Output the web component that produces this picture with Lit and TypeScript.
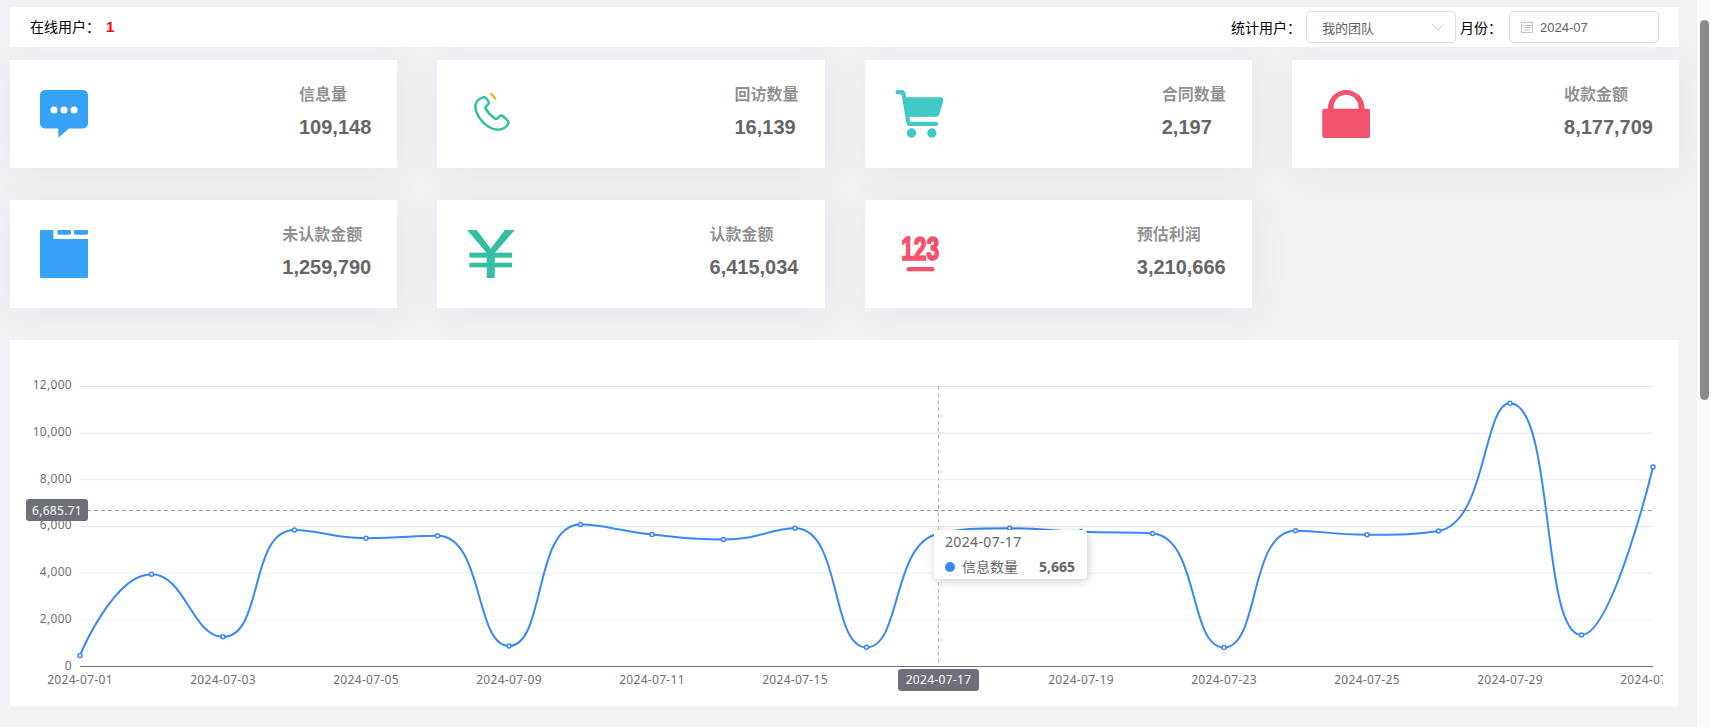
import { LitElement, html, css, svg } from "lit";
import { customElement } from "lit/decorators.js";

const DATA = [450, 3930, 1250, 5830, 5480, 5580, 860, 6060, 5640, 5420, 5900, 800, 5665, 5900, 5750, 5680, 790, 5800, 5630, 5790, 11260, 1330, 8530];
const LABELS: [number, string][] = [
  [0, "2024-07-01"], [2, "2024-07-03"], [4, "2024-07-05"], [6, "2024-07-09"], [8, "2024-07-11"], [10, "2024-07-15"],
  [14, "2024-07-19"], [16, "2024-07-23"], [18, "2024-07-25"], [20, "2024-07-29"], [22, "2024-07-31"],
];
const X0 = 54, DX = 71.5, Y0 = 310, PER = 280 / 12000;
const px = (i: number) => X0 + i * DX;
const py = (v: number) => Y0 - v * PER;

function smoothPath(pts: [number, number][], smooth = 0.5): string {
  let d = `M${pts[0][0]} ${pts[0][1]}`;
  let cpx = pts[0][0], cpy = pts[0][1];
  for (let i = 1; i < pts.length; i++) {
    const [x, y] = pts[i];
    const [prevX, prevY] = pts[i - 1];
    let n0x = x, n0y = y, n1x = x, n1y = y;
    if (i + 1 < pts.length) {
      const [nextX, nextY] = pts[i + 1];
      let vx = nextX - prevX, vy = nextY - prevY;
      const lenPrev = Math.hypot(x - prevX, y - prevY);
      const lenNext = Math.hypot(nextX - x, nextY - y);
      const r = lenNext / (lenNext + lenPrev);
      n1x = x + vx * smooth * r;
      n1y = y + vy * smooth * r;
      n1x = Math.max(Math.min(n1x, Math.max(nextX, x)), Math.min(nextX, x));
      n1y = Math.max(Math.min(n1y, Math.max(nextY, y)), Math.min(nextY, y));
      vx = n1x - x; vy = n1y - y;
      n0x = x - (vx * lenPrev) / lenNext;
      n0y = y - (vy * lenPrev) / lenNext;
      n0x = Math.max(Math.min(n0x, Math.max(prevX, x)), Math.min(prevX, x));
      n0y = Math.max(Math.min(n0y, Math.max(prevY, y)), Math.min(prevY, y));
      vx = x - n0x; vy = y - n0y;
      n1x = x + (vx * lenNext) / lenPrev;
      n1y = y + (vy * lenNext) / lenPrev;
    }
    d += `C${cpx} ${cpy} ${n0x} ${n0y} ${x} ${y}`;
    cpx = n1x; cpy = n1y;
  }
  return d;
}

const ICONS: Record<string, unknown> = {
  message: html`<svg class="icon" viewBox="0 0 48 48"><path fill="#36a3f7" d="M5 0H43A5 5 0 0 1 48 5V33.5A5 5 0 0 1 43 38.5H29L18.3 47.7V38.5H5A5 5 0 0 1 0 33.5V5A5 5 0 0 1 5 0Z"/><g fill="#fff"><circle cx="14" cy="20" r="3.5"/><circle cx="24" cy="20" r="3.5"/><circle cx="34" cy="20" r="3.5"/></g></svg>`,
  phone: html`<svg class="icon" viewBox="111.75 150 144 144"><path fill="none" stroke="#34bfa3" stroke-width="7.5" stroke-linejoin="round" d="M160 172Q165 170 169 175L176 184Q179 189 174 194L168 200Q166 203 168 207Q178 224 196 236Q200 238 203 235L209 229Q214 225 219 228L233 241Q238 246 235 252Q226 268 205 269Q172 268 148 232Q134 210 138 192Q142 178 160 172Z"/><path fill="none" stroke="#ffa500" stroke-width="6" d="M182 160Q192 167 198 178"/></svg>`,
  cart: html`<svg class="icon" viewBox="103.5 150 144 144"><g fill="#40c9c6"><path d="M105 157Q105 150 113 150H124Q133 150 135 160L137 172H242Q251 172 249 182L236 224Q235 229 229 230L147 231L148 245H226Q233 245 233 251Q233 258 226 258H147Q139 258 138 250L124 168Q123 163 118 163H112Q105 163 105 157Z"/><circle cx="153" cy="279" r="14"/><circle cx="214" cy="279" r="14"/></g></svg>`,
  lock: html`<svg class="icon" viewBox="365.25 270 144 144"><g fill="#f4516c"><path fill-rule="evenodd" d="M383 330V325A55 55 0 0 1 493 325V330ZM400 328H475V322A37.5 37.5 0 0 0 400 322Z"/><rect x="366" y="326" width="144" height="88" rx="8"/></g></svg>`,
  folder: html`<svg class="icon" viewBox="120 120 144 144"><g fill="#36a3f7"><path d="M123 120H160V147H264V261Q264 264 261 264H123Q120 264 120 261V123Q120 120 123 120Z"/><rect x="172" y="120" width="41" height="14" rx="4"/><rect x="222" y="120" width="42" height="14" rx="4"/></g></svg>`,
  yen: html`<svg class="icon" viewBox="111.75 120 144 144"><g fill="#34bfa3"><path d="M112 120H141L183 176L225 120H255L195 189H171Z"/><rect x="119" y="188" width="128" height="15"/><rect x="119" y="218" width="128" height="14"/><rect x="171" y="180" width="24" height="84"/></g></svg>`,
  num: html`<svg class="icon" viewBox="103.5 120 144 144"><text class="num-glyph" x="122" y="211" textLength="114" lengthAdjust="spacingAndGlyphs">123</text><rect x="138" y="231" width="84" height="13" rx="6.5" fill="#f4516c"/></svg>`,
};

const CARDS = [
  ["message", "信息量", "109,148"],
  ["phone", "回访数量", "16,139"],
  ["cart", "合同数量", "2,197"],
  ["lock", "收款金额", "8,177,709"],
  ["folder", "未认款金额", "1,259,790"],
  ["yen", "认款金额", "6,415,034"],
  ["num", "预估利润", "3,210,666"],
];

@customElement("app-root")
export class AppRoot extends LitElement {
  static styles = css`
    :host { display: flex; height: 727px; overflow: hidden; font-family: "Liberation Sans", "Noto Sans CJK SC", sans-serif; font-size: 14px; }
    .main { flex: 1; min-width: 0; background: #f0f2f5; padding: 7px 18px 0 10px; overflow: hidden; }
    .rail { width: 14px; background: #fafafa; padding: 20px 2px 0 3px; box-sizing: border-box; flex: none; }
    .thumb { height: 380px; background: #8a8a8a; border-radius: 5px; }
    .toolbar { height: 40px; background: #fff; display: flex; align-items: center; justify-content: space-between; padding: 0 20px; color: #000; }
    .online { margin-top: -2px; }
    .online b { color: #f00; font-size: 15px; margin-left: 2px; }
    .filters { display: flex; align-items: center; }
    .filter-label { margin-top: -1px; }
    .input { width: 150px; height: 32px; box-sizing: border-box; border: 1px solid #dcdfe6; border-radius: 4px; display: flex; align-items: center; font-size: 13px; color: #606266; background: #fff; }
    .select { padding: 0 11px 0 15px; justify-content: space-between; margin: 0 4px 0 5px; }
    .date { padding-left: 11px; gap: 7px; margin-left: 7px; }
    .grid { display: grid; grid-template-columns: repeat(4, 1fr); column-gap: 40px; row-gap: 32px; margin-top: 13px; }
    .card { height: 108px; background: #fff; color: #666; box-shadow: 4px 4px 40px rgba(0, 0, 0, 0.05); display: flex; justify-content: space-between; padding: 30px 26px 0 30px; box-sizing: border-box; }
    .icon { width: 48px; height: 48px; display: block; flex: none; }
    .num-glyph { fill: #f4516c; stroke: #f4516c; stroke-width: 5px; font-family: "Liberation Sans", sans-serif; font-weight: 700; font-size: 98px; }
    .desc { font-weight: 700; }
    .label { font-size: 16px; line-height: 18px; color: rgba(0, 0, 0, 0.45); margin-bottom: 12px; font-weight: 700; margin-top: -4px; }
    .value { font-size: 20px; line-height: 23px; }
    .panel { background: #fff; margin-top: 32px; padding: 16px 16px 0; }
    .chart { position: relative; height: 350px; overflow: hidden; }
    .chart > svg { display: block; width: 1637px; height: 350px; }
    .axis { font-family: "Noto Sans", "Liberation Sans", sans-serif; font-size: 12px; letter-spacing: 0.3px; fill: #6e7079; }
    .axis-on { fill: #fff; }
    .tip { position: absolute; left: 908px; top: 174px; width: 153px; height: 49px; box-sizing: border-box; background: #fff; border-radius: 4px; box-shadow: 1px 2px 10px rgba(0, 0, 0, 0.2); padding: 2px 12px 0 11px; color: #666; font-family: "Noto Sans", "Noto Sans CJK SC", sans-serif; font-size: 14px; }
    .tip-title { line-height: 20px; letter-spacing: 0.35px; }
    .tip-row { display: flex; align-items: center; margin-top: 5px; line-height: 20px; }
    .dot { width: 10px; height: 10px; border-radius: 50%; background: #3888fa; margin-right: 7px; }
    .tip-val { margin-left: auto; font-weight: 700; }
  `;

  render() {
    const pts = DATA.map((v, i) => [px(i), py(v)] as [number, number]);
    const gridColors = ["#f2f4f9", "#e9edf6", "#e0e6f1", "#e0e6f1", "#e0e6f1", "#e0e6f1"];
    return html`
      <div class="main">
        <div class="toolbar">
          <div class="online">在线用户： <b>1</b></div>
          <div class="filters">
            <span class="filter-label">统计用户：</span>
            <div class="input select">
              <span>我的团队</span>
              <svg width="12" height="7" viewBox="0 0 12 7"><path d="M.5.5L6 6L11.5.5" fill="none" stroke="#c0c4cc"/></svg>
            </div>
            <span class="filter-label">月份：</span>
            <div class="input date">
              <svg width="12" height="12" viewBox="0 0 12 12" fill="none" stroke="#c0c4cc"><rect x=".5" y="1.5" width="11" height="10"/><path d="M.5 4.5H11.5M3 0V2M9 0V2M2.5 6.5H9.5M2.5 9H9.5"/></svg>
              <span>2024-07</span>
            </div>
          </div>
        </div>
        <div class="grid">
          ${CARDS.map(([ic, label, value]) => html`
            <div class="card">
              ${ICONS[ic]}
              <div class="desc">
                <div class="label">${label}</div>
                <div class="value">${value}</div>
              </div>
            </div>`)}
        </div>
        <div class="panel">
          <div class="chart">
            <svg viewBox="0 0 1637 350">
              ${gridColors.map((c, i) => svg`<line x1="54" x2="1627" y1=${Y0 - (i + 1) * 46.667 + 0.5} y2=${Y0 - (i + 1) * 46.667 + 0.5} stroke=${c}/>`)}
              <line x1="54" x2="1627" y1="310.5" y2="310.5" stroke="#6e7079"/>
              ${[0, 1, 2, 3, 4, 5, 6].map((i) => svg`<text class="axis" text-anchor="end" x="46" y=${Y0 - i * 46.667 + 3.5}>${(i * 2000).toLocaleString("en-US")}</text>`)}
              ${LABELS.map(([i, t]) => svg`<text class="axis" text-anchor="middle" x=${px(i)} y="328">${t}</text>`)}
              <line x1="912.5" x2="912.5" y1="30" y2="310" stroke="#b6bac6" stroke-dasharray="4 3"/>
              <path d=${smoothPath(pts)} fill="none" stroke="#3888fa" stroke-width="2"/>
              ${pts.map(([x, y]) => svg`<circle cx=${x} cy=${y} r="2" fill="#fff" stroke="#3888fa" stroke-width="1.5"/>`)}
              <line x1="54" x2="1627" y1="154.5" y2="154.5" stroke="#999" stroke-dasharray="4 3"/>
              <rect x="0" y="143" width="62" height="22" rx="3" fill="#6e7079"/>
              <text class="axis axis-on" text-anchor="middle" x="31" y="158.5">6,685.71</text>
              <rect x="872" y="313" width="81" height="22" rx="3" fill="#6e7079"/>
              <text class="axis axis-on" text-anchor="middle" x="912.5" y="328">2024-07-17</text>
            </svg>
            <div class="tip">
              <div class="tip-title">2024-07-17</div>
              <div class="tip-row"><span class="dot"></span><span>信息数量</span><span class="tip-val">5,665</span></div>
            </div>
          </div>
        </div>
      </div>
      <div class="rail"><div class="thumb"></div></div>
    `;
  }
}
